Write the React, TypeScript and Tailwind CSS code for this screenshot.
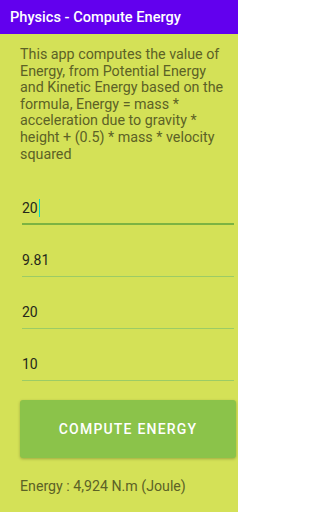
import { useState } from 'react';

const fields = ['20', '9.81', '20', '10'];

export default function App() {
  const [values] = useState(fields);

  return (
    <div className="w-[238px] h-[512px] bg-[#d4e157] font-['Roboto',sans-serif] overflow-hidden">
      <header className="h-[34px] bg-[#6200ee] flex items-center px-[10px]">
        <h1 className="text-white text-[14.6px] font-medium leading-none">Physics - Compute Energy</h1>
      </header>

      <p className="pl-[20px] pr-[6px] pt-[12px] text-[14.3px] leading-[16.6px] text-[#5c6226]">
        This app computes the value of Energy, from Potential Energy and Kinetic Energy based on the formula, Energy = mass * acceleration due to gravity * height + (0.5) * mass * velocity squared
      </p>

      <div className="mt-[11px] pl-[22px] pr-[4px] flex flex-col">
        {values.map((v, i) => (
          <div key={i} className="h-[52px] flex flex-col justify-end">
            <div className="flex items-center h-[20px] text-[14px] text-[#26281a] leading-none">
              <span>{v}</span>
              {i === 0 && <span className="ml-[1px] w-[1.5px] h-[18px] bg-[#03dac5]" />}
            </div>
            <div className={i === 0 ? 'mt-[5px] h-[2px] bg-[#7cb342]' : 'mt-[6px] h-px bg-[#9ccc65]'} />
          </div>
        ))}
      </div>

      <div className="pl-[20px] pr-[2px] mt-[19px]">
        <button className="w-full h-[58px] bg-[#8bc34a] rounded-[3px] shadow-[0_1px_3px_rgba(0,0,0,0.25)] text-white text-[14px] font-medium tracking-[1.2px]">
          COMPUTE ENERGY
        </button>
      </div>

      <p className="px-[20px] mt-[20px] text-[14.2px] text-[#5c6226] leading-[16px]">Energy : 4,924 N.m (Joule)</p>
    </div>
  );
}
